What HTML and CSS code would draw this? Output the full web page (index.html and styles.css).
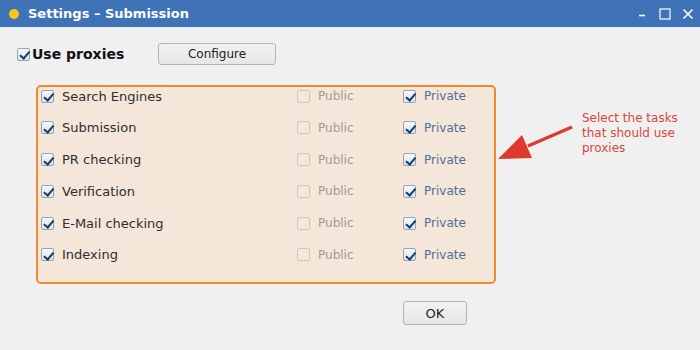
FILE: index.html
```html
<!DOCTYPE html>
<html>
<head>
<meta charset="utf-8">
<link rel="stylesheet" href="styles.css">
</head>
<body>
<div class="window">
  <div class="titlebar">
    <span class="dot"></span>
    <span class="title">Settings – Submission</span>
    <div class="controls">
      <svg width="12" height="12" viewBox="0 0 12 12"><path d="M3 7.5h6" stroke="#fff" stroke-width="1.6"/></svg>
      <svg width="12" height="12" viewBox="0 0 12 12"><rect x="1" y="1" width="10" height="10" fill="none" stroke="#fff" stroke-width="1.2"/></svg>
      <svg width="12" height="12" viewBox="0 0 12 12"><path d="M1.5 1.5l9 9M10.5 1.5l-9 9" stroke="#fff" stroke-width="1.6"/></svg>
    </div>
  </div>
  <div class="content">
    <div class="toprow">
      <label class="main-check"><span class="cb checked"></span>Use proxies</label>
      <button class="btn configure">Configure</button>
    </div>
    <div class="middle">
      <div class="taskbox">
        <div class="row"><span class="task"><span class="cb checked"></span>Search Engines</span><span class="pub"><span class="cb off"></span>Public</span><span class="priv"><span class="cb checked"></span>Private</span></div>
        <div class="row"><span class="task"><span class="cb checked"></span>Submission</span><span class="pub"><span class="cb off"></span>Public</span><span class="priv"><span class="cb checked"></span>Private</span></div>
        <div class="row"><span class="task"><span class="cb checked"></span>PR checking</span><span class="pub"><span class="cb off"></span>Public</span><span class="priv"><span class="cb checked"></span>Private</span></div>
        <div class="row"><span class="task"><span class="cb checked"></span>Verification</span><span class="pub"><span class="cb off"></span>Public</span><span class="priv"><span class="cb checked"></span>Private</span></div>
        <div class="row"><span class="task"><span class="cb checked"></span>E-Mail checking</span><span class="pub"><span class="cb off"></span>Public</span><span class="priv"><span class="cb checked"></span>Private</span></div>
        <div class="row"><span class="task"><span class="cb checked"></span>Indexing</span><span class="pub"><span class="cb off"></span>Public</span><span class="priv"><span class="cb checked"></span>Private</span></div>
      </div>
      <svg class="arrow" width="80" height="40" viewBox="0 0 80 40">
        <path d="M74 4 L30 23" stroke="#e03a2f" stroke-width="3.5" fill="none"/>
        <polygon points="0,36 24,12 34,35" fill="#e03a2f"/>
      </svg>
      <div class="note">Select the tasks<br>that should use<br>proxies</div>
    </div>
    <div class="bottom">
      <button class="btn ok">OK</button>
    </div>
  </div>
</div>
</body>
</html>
```

FILE: styles.css
```css
html, body {
  margin: 0;
  padding: 0;
}
body {
  width: 700px;
  height: 350px;
  overflow: hidden;
  background: #f0f0f0;
  font-family: "DejaVu Sans", "Liberation Sans", sans-serif;
}
.window {
  display: flex;
  flex-direction: column;
  height: 350px;
}
.titlebar {
  height: 27px;
  background: #3f72b6;
  border-bottom: 2px solid #e8f0f7;
  display: flex;
  align-items: center;
  padding-left: 9px;
  box-sizing: content-box;
}
.dot {
  width: 10px;
  height: 10px;
  border-radius: 50%;
  background: #f5c518;
  margin-right: 9px;
}
.title {
  color: #fff;
  font-weight: bold;
  font-size: 13px;
}
.controls {
  margin-left: auto;
  display: flex;
  gap: 11px;
  padding-right: 6px;
  align-items: center;
}
.content {
  flex: 1;
  display: flex;
  flex-direction: column;
}
.toprow {
  display: flex;
  align-items: center;
  padding: 14px 0 0 17px;
}
.main-check {
  display: flex;
  align-items: center;
  font-weight: bold;
  font-size: 14px;
  color: #111;
  width: 141px;
}
.main-check .cb {
  margin-right: 2px;
}
.btn {
  font-family: "DejaVu Sans", "Liberation Sans", sans-serif;
  font-size: 12px;
  color: #222;
  background: linear-gradient(#f2f2f2, #e6e6e6);
  border: 1px solid #b4b4b4;
  border-radius: 3px;
  padding: 0;
}
.configure {
  width: 118px;
  height: 22px;
}
.middle {
  display: flex;
  align-items: flex-start;
  padding: 20px 0 0 36px;
}
.taskbox {
  width: 453px;
  height: 195px;
  border: 2px solid #f28a2a;
  border-radius: 5px;
  background: #f5e6da;
  padding: 0 0 0 3px;
  box-sizing: content-box;
  display: flex;
  flex-direction: column;
  gap: 13.8px;
  font-size: 13px;
}
.row {
  display: grid;
  grid-template-columns: 256px 106px 1fr;
  height: 18px;
  align-items: center;
}
.row > span {
  display: flex;
  align-items: center;
}
.task { color: #2e2e2e; }
.task .cb, .pub .cb, .priv .cb { margin-right: 8px; }
.pub { color: #a09a96; font-size: 12px; }
.priv { color: #4f6f98; font-size: 12px; }
.cb {
  width: 13px;
  height: 13px;
  box-sizing: border-box;
  border: 1px solid #95a3b6;
  border-radius: 2px;
  background: linear-gradient(#f7f7f7, #dfe4ea);
  position: relative;
  flex: none;
}
.cb.checked::after {
  content: "";
  position: absolute;
  left: 3.5px;
  top: 0.5px;
  width: 3.5px;
  height: 7.5px;
  border: solid #143a6e;
  border-width: 0 2px 2px 0;
  transform: rotate(40deg);
}
.cb.off {
  border-color: #d4c6ba;
  background: #f3e8de;
}
.arrow {
  margin: 38px 0 0 2px;
}
.note {
  margin: 26px 0 0 4px;
  font-size: 12px;
  line-height: 15px;
  color: #d9463f;
}
.bottom {
  display: flex;
  padding: 17px 0 0 403px;
}
.ok {
  width: 64px;
  height: 24px;
  font-size: 13px;
}
```
